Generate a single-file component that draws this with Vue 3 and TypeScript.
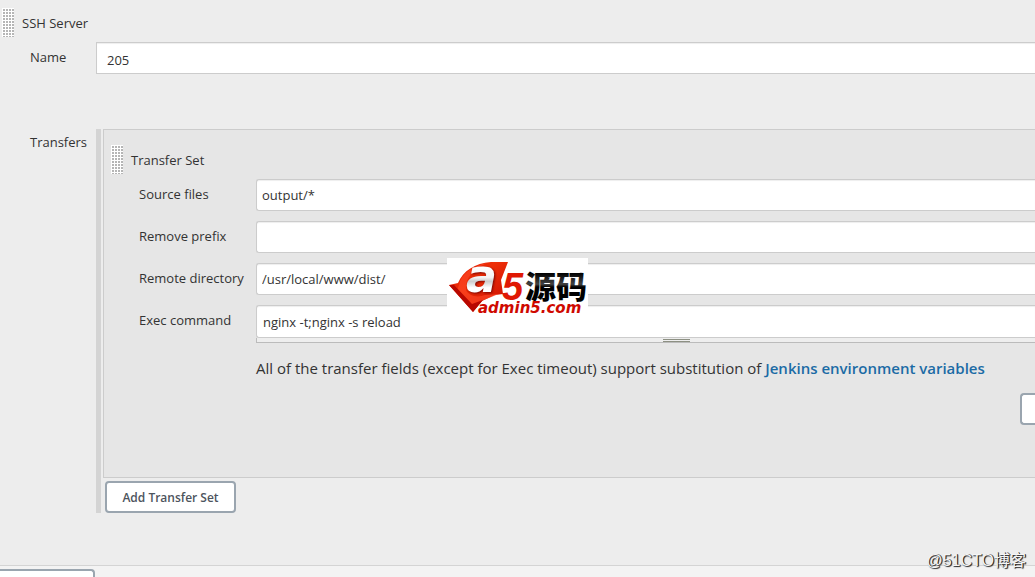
<script setup lang="ts">
import { ref } from 'vue'

interface Field {
  id: string
  label: string
  value: string
}

const serverName = ref('205')
const fields = ref<Field[]>([
  { id: 'source-files', label: 'Source files', value: 'output/*' },
  { id: 'remove-prefix', label: 'Remove prefix', value: '' },
  { id: 'remote-directory', label: 'Remote directory', value: '/usr/local/www/dist/' },
])
const command = ref('nginx -t;nginx -s reload')
</script>

<template>
  <div class="page">
    <main class="config">
      <header class="heading">
        <span class="grip"></span>
        <span>SSH Server</span>
      </header>

      <div class="server-row name-row">
        <label for="server-name">Name</label>
        <input id="server-name" v-model="serverName" class="box name-box" type="text" />
      </div>

      <div class="server-row">
        <span class="transfers-label">Transfers</span>
        <section class="transfers">
          <div class="transfer-set">
            <header class="heading">
              <span class="grip"></span>
              <span>Transfer Set</span>
            </header>
            <div class="fields">
              <div v-for="field in fields" :key="field.id" class="field">
                <label :for="field.id">{{ field.label }}</label>
                <input :id="field.id" v-model="field.value" class="box" type="text" />
              </div>
              <div class="field">
                <label for="exec-command">Exec command</label>
                <div class="command">
                  <textarea id="exec-command" v-model="command" class="box" rows="1"></textarea>
                  <div class="resizer"><span></span></div>
                </div>
              </div>
              <p class="help">
                All of the transfer fields (except for Exec timeout) support substitution of
                <a href="#">Jenkins environment variables</a>
              </p>
            </div>
            <button class="button advanced" type="button" aria-label="Advanced"></button>
          </div>
          <button class="button add" type="button">Add Transfer Set</button>
        </section>
      </div>
    </main>

    <footer class="bottom">
      <button class="button save" type="button" aria-label="Save"></button>
    </footer>

    <svg class="logo" width="141" height="57" viewBox="0 0 141 57" role="img" aria-label="admin5.com">
      <defs>
        <linearGradient id="red" x1="0" y1="0" x2="1" y2="1">
          <stop offset="0" stop-color="#e01a04" />
          <stop offset="0.4" stop-color="#ee2f08" />
          <stop offset="1" stop-color="#c40800" />
        </linearGradient>
        <linearGradient id="silver" gradientUnits="userSpaceOnUse" x1="0" y1="9" x2="0" y2="35">
          <stop offset="0" stop-color="#ffffff" />
          <stop offset="0.4" stop-color="#f4f4f4" />
          <stop offset="0.55" stop-color="#cccccc" />
          <stop offset="0.8" stop-color="#ffffff" />
        </linearGradient>
        <linearGradient id="ink" gradientUnits="userSpaceOnUse" x1="0" y1="15" x2="0" y2="43">
          <stop offset="0" stop-color="#000000" />
          <stop offset="0.4" stop-color="#444444" />
          <stop offset="0.5" stop-color="#000000" />
        </linearGradient>
      </defs>
      <rect width="141" height="57" fill="#ffffff" />
      <path d="M2 27L11 25C16 13 28 5 44 4L61 4L54 22L56 36L48 37L35 43L26 54Z" fill="url(#red)" />
      <path d="M12 27C14 16 25 8 40 5C26 11 18 20 19 32C22 38 30 40 38 37L52 36L34 43L26 49L10 32Z" fill="#ff4a28" opacity="0.6" />
      <path d="M2 27L7 27L25 46L36 42L26 54Z" fill="#b80800" />
      <text class="letter" x="19" y="34" font-size="46" fill="url(#silver)">a</text>
      <text class="digit" x="55" y="42" font-size="38" fill="#e01803">5</text>
      <text class="hanzi" x="78" y="40" font-size="31" fill="url(#ink)">源码</text>
      <text class="domain" x="31" y="55" font-size="15" fill="#cf0900">admin5.com</text>
    </svg>
    <span class="watermark">@51CTO博客</span>
  </div>
</template>

<style>
html,
body {
  margin: 0;
  overflow: hidden;
}
</style>

<style scoped>
.page {
  position: relative;
  box-sizing: border-box;
  min-height: 100vh;
  background: #ededed;
  color: #333;
  font: 13px/20px 'Open Sans', 'Noto Sans', sans-serif;
}

.config {
  padding: 8px 0 52px;
}

.heading {
  display: flex;
  align-items: flex-start;
  gap: 8px;
  height: 30px;
  padding-left: 2px;
  line-height: 30px;
}

.grip {
  width: 12px;
  height: 29px;
  background-color: #fff;
  background-image: radial-gradient(circle at 2px 2px, #b5b5b5 1px, transparent 1px);
  background-size: 3px 3px;
}

.server-row {
  display: grid;
  grid-template-columns: 66px minmax(0, 1fr);
  padding-left: 30px;
}

.name-row {
  margin: 4px 0 55px;
}

.name-row label {
  padding-top: 5px;
}

.transfers-label {
  padding-top: 3px;
}

.box {
  display: block;
  box-sizing: border-box;
  width: 100%;
  height: 32px;
  margin: 0;
  padding: 0 5px;
  border: 1px solid #ccc;
  border-right: 0;
  border-radius: 3px 0 0 3px;
  outline: 0;
  background: #fff;
  box-shadow: inset 0 1px 1px #eee;
  color: #333;
  font: 13px/20px 'Open Sans', 'Noto Sans', sans-serif;
}

.name-box {
  padding: 4px 10px 0;
  border-radius: 0;
}

.transfers {
  padding-left: 2px;
  border-left: 5px solid #d4d4d4;
}

.transfer-set {
  box-sizing: border-box;
  min-height: 349px;
  padding: 15px 0 52px 5px;
  border: 1px solid #ccc;
  border-right: 0;
  background: #e6e6e6;
}

.fields {
  display: grid;
  gap: 10px;
  padding: 4px 0 0 30px;
}

.field {
  display: grid;
  grid-template-columns: 117px minmax(0, 1fr);
}

.field label {
  padding-top: 5px;
}

textarea.box {
  padding: 6px 6px 4px;
  height: 33px;
  overflow: hidden;
  resize: none;
}

.resizer {
  display: flex;
  justify-content: center;
  height: 4px;
  padding-left: 60px;
  border-bottom: 1px solid #bbb;
  border-left: 1px solid #bbb;
  background: #eee;
}

.resizer span {
  width: 27px;
  height: 1px;
  margin-top: 1px;
  border-top: 1px solid #8d9083;
  border-bottom: 1px solid #8d9083;
}

.help {
  margin: 4px 0 1px 117px;
  font-size: 15px;
  line-height: 22px;
  white-space: nowrap;
}

.help a {
  color: #1b6ba5;
  font-weight: 600;
  text-decoration: none;
}

.button {
  display: block;
  box-sizing: border-box;
  height: 32px;
  padding: 1px 0 0;
  border: 2px solid #9aa5af;
  border-radius: 4px;
  background: #fff;
  color: #4d545d;
  font: 600 12px/20px 'Open Sans', 'Noto Sans', sans-serif;
}

.advanced {
  width: 15px;
  margin: 13px 0 0 auto;
  border-right: 0;
  border-radius: 4px 0 0 4px;
}

.add {
  width: 131px;
  margin: 3px 0 0 2px;
}

.bottom {
  height: 8px;
  padding-top: 3px;
  border-top: 1px solid #d4d4d4;
  background: #f3f3f3;
}

.save {
  width: 95px;
  height: 8px;
  border-bottom: 0;
  border-left: 0;
  border-radius: 0 4px 0 0;
}

.logo {
  position: absolute;
  top: 258px;
  left: 447px;
}

.letter,
.digit,
.domain {
  font-family: 'DejaVu Sans', sans-serif;
  font-weight: bold;
  font-style: italic;
}

.letter {
  filter: drop-shadow(1px 1px 1px #7a0500);
}

.digit {
  font-family: 'Liberation Sans', sans-serif;
}

.hanzi {
  font-family: 'Noto Sans CJK SC', sans-serif;
  font-weight: 900;
}

.watermark {
  position: absolute;
  right: 9px;
  bottom: 6px;
  color: #f5f5f5;
  font: 16px/20px 'Liberation Sans', 'Noto Sans CJK SC', sans-serif;
  text-shadow: 1px 1px 1px #222, 1px 0 0 #444;
}
</style>
